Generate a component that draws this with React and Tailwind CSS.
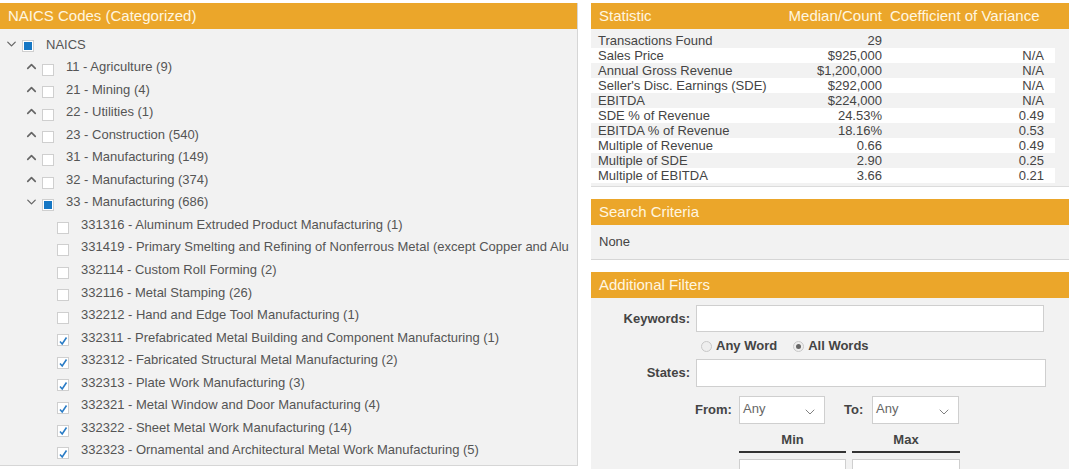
import { ChevronDown, ChevronUp } from 'lucide-react';

const tree = [
  { level: 0, label: 'NAICS', toggle: 'down', state: 'partial' },
  { level: 1, label: '11 - Agriculture (9)', toggle: 'up', state: 'off' },
  { level: 1, label: '21 - Mining (4)', toggle: 'up', state: 'off' },
  { level: 1, label: '22 - Utilities (1)', toggle: 'up', state: 'off' },
  { level: 1, label: '23 - Construction (540)', toggle: 'up', state: 'off' },
  { level: 1, label: '31 - Manufacturing (149)', toggle: 'up', state: 'off' },
  { level: 1, label: '32 - Manufacturing (374)', toggle: 'up', state: 'off' },
  { level: 1, label: '33 - Manufacturing (686)', toggle: 'down', state: 'partial' },
  { level: 2, label: '331316 - Aluminum Extruded Product Manufacturing (1)', state: 'off' },
  { level: 2, label: '331419 - Primary Smelting and Refining of Nonferrous Metal (except Copper and Alu', state: 'off' },
  { level: 2, label: '332114 - Custom Roll Forming (2)', state: 'off' },
  { level: 2, label: '332116 - Metal Stamping (26)', state: 'off' },
  { level: 2, label: '332212 - Hand and Edge Tool Manufacturing (1)', state: 'off' },
  { level: 2, label: '332311 - Prefabricated Metal Building and Component Manufacturing (1)', state: 'on' },
  { level: 2, label: '332312 - Fabricated Structural Metal Manufacturing (2)', state: 'on' },
  { level: 2, label: '332313 - Plate Work Manufacturing (3)', state: 'on' },
  { level: 2, label: '332321 - Metal Window and Door Manufacturing (4)', state: 'on' },
  { level: 2, label: '332322 - Sheet Metal Work Manufacturing (14)', state: 'on' },
  { level: 2, label: '332323 - Ornamental and Architectural Metal Work Manufacturing (5)', state: 'on' },
];

const stats = [
  ['Transactions Found', '29', ''],
  ['Sales Price', '$925,000', 'N/A'],
  ['Annual Gross Revenue', '$1,200,000', 'N/A'],
  ["Seller's Disc. Earnings (SDE)", '$292,000', 'N/A'],
  ['EBITDA', '$224,000', 'N/A'],
  ['SDE % of Revenue', '24.53%', '0.49'],
  ['EBITDA % of Revenue', '18.16%', '0.53'],
  ['Multiple of Revenue', '0.66', '0.49'],
  ['Multiple of SDE', '2.90', '0.25'],
  ['Multiple of EBITDA', '3.66', '0.21'],
];

function Box({ state }) {
  return (
    <span className="relative flex h-[12px] w-[12px] shrink-0 items-center justify-center border border-[#cfcfcf] bg-white">
      {state === 'partial' && <span className="h-[8px] w-[8px] bg-[#1677c4]" />}
      {state === 'on' && (
        <svg width="10" height="10" viewBox="0 0 10 10" className="mt-[1px]">
          <path d="M2 5.5 L4.2 8 L8.5 1.5" fill="none" stroke="#2a7cc6" strokeWidth="1.6" />
        </svg>
      )}
    </span>
  );
}

function TreeRow({ row }) {
  const pad = row.level === 0 ? 'pl-[4px]' : row.level === 1 ? 'pl-[24px]' : 'pl-[57px]';
  return (
    <div className={`flex h-[22.55px] items-center whitespace-nowrap ${pad}`}>
      {row.toggle && (
        <span className="mr-[3px] flex w-[15px] justify-center text-[#666]">
          {row.toggle === 'down' ? <ChevronDown size={16} strokeWidth={2} /> : <ChevronUp size={17} strokeWidth={2.6} />}
        </span>
      )}
      <span className={row.level === 0 ? 'mt-[3px]' : 'mt-[6px]'}>
        <Box state={row.state} />
      </span>
      <span className="ml-[12px] text-[13px] text-[#555]">{row.label}</span>
    </div>
  );
}

function Header({ children }) {
  return (
    <div className="flex h-[26px] items-center bg-[#eba62a] px-[8px] text-[15px] text-[#fff6e0]">
      {children}
    </div>
  );
}

export default function App() {
  return (
    <div
      className="flex h-[469px] w-[1071px] gap-[13px] overflow-hidden bg-white pt-[3px]"
      style={{ fontFamily: '"Liberation Sans", Arial, sans-serif' }}
    >
      <div className="flex h-[463px] w-[578px] shrink-0 flex-col overflow-hidden border-r border-b border-[#d6d6d6] bg-[#f2f2f2]">
        <Header>NAICS Codes (Categorized)</Header>
        <div className="overflow-hidden pt-[4px]">
          {tree.map((r, i) => (
            <TreeRow key={i} row={r} />
          ))}
        </div>
      </div>

      <div className="flex w-[478px] shrink-0 flex-col">
        <div className="border-b border-[#dcdcdc] bg-[#f2f2f2]">
          <div className="flex h-[26px] items-center bg-[#eba62a] pl-[8px] text-[15px] text-[#fff6e0]">
            <span className="flex-1">Statistic</span>
            <span className="w-[120px] whitespace-nowrap pr-[8px] text-right">Median/Count</span>
            <span className="w-[179px] whitespace-nowrap">Coefficient of Variance</span>
          </div>
          <div className="mr-[14px] pb-[3px] pt-[4px]">
            {stats.map((s, i) => (
              <div
                key={i}
                className={`flex h-[15px] items-center pl-[7px] text-[13px] leading-[15px] text-[#444] ${i % 2 === 1 ? 'bg-white' : ''}`}
              >
                <span className="flex-1 whitespace-nowrap">{s[0]}</span>
                <span className="w-[120px] pr-[8px] text-right">{s[1]}</span>
                <span className="w-[165px] pr-[11px] text-right">{s[2]}</span>
              </div>
            ))}
          </div>
        </div>

        <div className="mt-[12px] border-b border-[#d6d6d6] bg-[#f2f2f2]">
          <Header>Search Criteria</Header>
          <div className="flex h-[34px] items-center pl-[8px] text-[13px] text-[#444]">None</div>
        </div>

        <div className="mt-[12px] flex-1 bg-[#f2f2f2]">
          <Header>Additional Filters</Header>
          <div className="pt-[7px] text-[13px] font-bold text-[#444]">
            <div className="flex items-center">
              <span className="w-[99px] text-right">Keywords:</span>
              <div className="ml-[6px] h-[27px] w-[348px] border border-[#cfcfcf] bg-white" />
            </div>
            <div className="ml-[110px] mt-[6px] flex h-[16px] items-center gap-[4px]">
              <span className="h-[11px] w-[11px] rounded-full border border-[#c8c8c8] bg-[#eee]" />
              <span className="mr-[12px]">Any Word</span>
              <span className="flex h-[11px] w-[11px] items-center justify-center rounded-full border border-[#c8c8c8] bg-[#eee]">
                <span className="h-[5px] w-[5px] rounded-full bg-[#666]" />
              </span>
              <span>All Words</span>
            </div>
            <div className="mt-[5px] flex items-center">
              <span className="w-[99px] text-right">States:</span>
              <div className="ml-[6px] h-[28px] w-[350px] border border-[#cfcfcf] bg-white" />
            </div>
            <div className="mt-[9px] flex items-center">
              <span className="ml-[104px] w-[44px]">From:</span>
              <div className="flex h-[28px] w-[86px] justify-between border border-[#cfcfcf] bg-white pl-[3px] pr-[6px] pt-[2px] text-[13px] font-normal text-[#666]">
                <span>Any</span>
                <ChevronDown size={16} strokeWidth={1.4} className="mt-[5px] text-[#777]" />
              </div>
              <span className="ml-[19px] w-[28px]">To:</span>
              <div className="flex h-[28px] w-[87px] justify-between border border-[#cfcfcf] bg-white pl-[3px] pr-[6px] pt-[2px] text-[13px] font-normal text-[#666]">
                <span>Any</span>
                <ChevronDown size={16} strokeWidth={1.4} className="mt-[5px] text-[#777]" />
              </div>
            </div>
            <div className="ml-[148px] mt-[6px] flex gap-[6px]">
              <div className="w-[107px]">
                <div className="border-b-2 border-[#333] pb-[1px] text-center">Min</div>
                <div className="mt-[6px] h-[20px] border border-[#cfcfcf] bg-white" />
              </div>
              <div className="w-[108px]">
                <div className="border-b-2 border-[#333] pb-[1px] text-center">Max</div>
                <div className="mt-[6px] h-[20px] border border-[#cfcfcf] bg-white" />
              </div>
            </div>
          </div>
        </div>
      </div>
    </div>
  );
}
